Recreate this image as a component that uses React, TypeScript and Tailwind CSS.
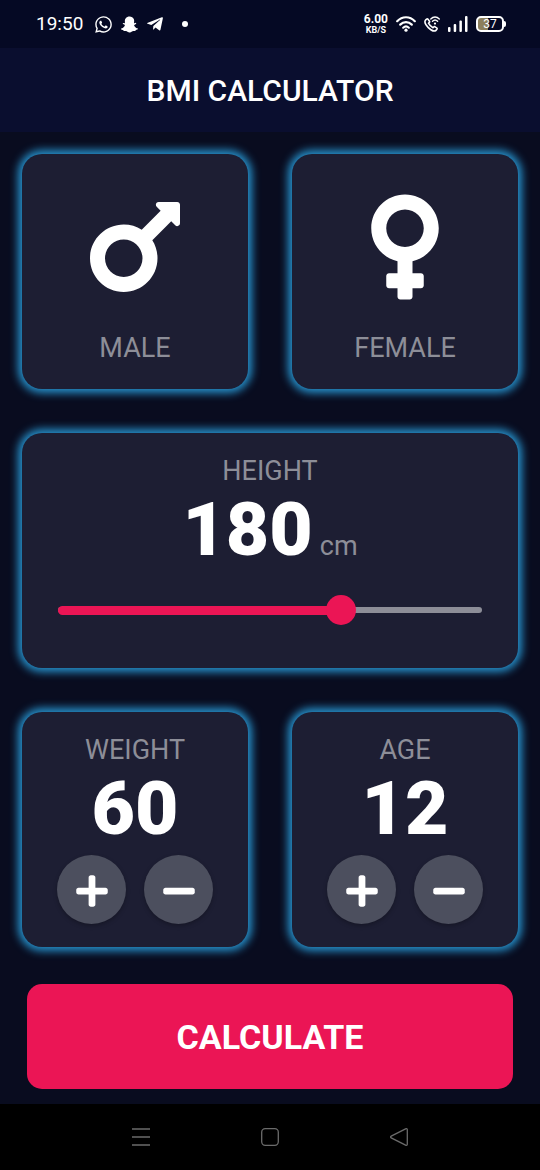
import { useState, type ReactNode } from "react";
import {
  FaMars,
  FaMinus,
  FaPlus,
  FaSnapchatGhost,
  FaTelegramPlane,
  FaVenus,
  FaWhatsapp,
} from "react-icons/fa";

const MIN_HEIGHT = 120;
const MAX_HEIGHT = 210;

const cardStyle =
  "flex min-h-[235px] flex-col items-center rounded-[20px] bg-[#1d1e33] shadow-[0_0_8px_4px_#2792cc]";
const labelStyle = "text-[27px] leading-8 text-[#8d8e98]";
const numberStyle = "text-[75px] leading-[84px] font-black text-white";

function StatusBar() {
  return (
    <div className="flex h-12 items-center justify-between bg-[#050924] pr-[34px] pl-9 text-white">
      <div className="flex items-center">
        <span className="text-[19px] leading-6">19:50</span>
        <FaWhatsapp className="ml-[11px] size-[19px]" />
        <FaSnapchatGhost className="ml-2 size-[17px]" />
        <FaTelegramPlane className="ml-2 size-[18px]" />
        <span className="ml-[18px] size-[6px] rounded-full bg-white" />
      </div>
      <div className="flex items-center gap-2">
        <div className="flex flex-col items-center gap-px font-bold">
          <span className="text-[12px] leading-3">6.00</span>
          <span className="text-[9px] leading-[9px]">KB/S</span>
        </div>
        <svg className="h-4 w-5" viewBox="0 0 20 16" fill="none" stroke="white" strokeWidth="2.2" strokeLinecap="round">
          <path d="M1.2 5.2C6.2-.1 13.8-.1 18.8 5.2" />
          <path d="M4.2 8.6c3.3-3.3 8.3-3.3 11.6 0" />
          <path d="M7.2 11.7c1.7-1.5 3.9-1.5 5.6 0" />
          <circle cx="10" cy="14.2" r="1.6" fill="white" stroke="none" />
        </svg>
        <svg className="size-4" viewBox="0 0 16 16" fill="none" stroke="white" strokeLinecap="round" strokeLinejoin="round">
          <path
            strokeWidth="1.6"
            d="M2.6 3.2 1.5 4.1C.3 5.8 1.9 9.2 4.3 11.6 6.7 14 10.1 15.7 11.9 14.5l1-1.2c.4-.6.3-1-.2-1.4l-1.7-1.1c-.5-.3-1-.2-1.3.2l-.7.8C7.4 11 5.4 9 4.5 7.2l.8-.8c.4-.4.4-.8.2-1.2L4 3.3c-.4-.5-.9-.5-1.4-.1Z"
          />
          <path strokeWidth="1.4" d="M6.8 2.9c2.5-2.5 6-2.5 8.5 0M8.5 5.3c1.5-1.5 3.6-1.5 5.1 0" />
          <circle cx="11" cy="7.6" r="1.1" fill="white" stroke="none" />
        </svg>
        <svg className="h-4 w-5" viewBox="0 0 20 16" fill="white">
          <rect x="0" y="11" width="2.5" height="5" rx="1" />
          <rect x="5.7" y="8" width="2.5" height="8" rx="1" />
          <rect x="11.4" y="4.5" width="2.5" height="11.5" rx="1" />
          <rect x="17" y="0" width="2.5" height="16" rx="1" />
        </svg>
        <div className="flex items-center">
          <div className="flex h-4 w-7 items-center justify-center rounded-[5px] border-2 border-white bg-linear-to-r from-[#8c7f5c] from-40% to-transparent to-40% text-[12px] leading-3">
            37
          </div>
          <span className="h-[6px] w-[2px] rounded-r bg-white" />
        </div>
      </div>
    </div>
  );
}

function GenderCard({ label, icon }: { label: string; icon: ReactNode }) {
  return (
    <button type="button" className={`${cardStyle} gap-[25px] pt-[33px]`}>
      {icon}
      <span className={labelStyle}>{label}</span>
    </button>
  );
}

function RoundButton({ label, onClick, children }: { label: string; onClick: () => void; children: ReactNode }) {
  return (
    <button
      type="button"
      aria-label={label}
      onClick={onClick}
      className="flex size-[69px] items-center justify-center rounded-full bg-[#4c4f5e] pt-[2px] text-4xl text-white shadow-[0_2px_4px_rgba(0,0,0,0.25)]"
    >
      {children}
    </button>
  );
}

function CounterCard({ label, initial }: { label: string; initial: number }) {
  const [value, setValue] = useState(initial);
  return (
    <section className={`${cardStyle} pt-[22px]`}>
      <h2 className={labelStyle}>{label}</h2>
      <output className={numberStyle}>{value}</output>
      <div className="mt-[5px] flex gap-[18px]">
        <RoundButton label={`Increase ${label}`} onClick={() => setValue(value + 1)}>
          <FaPlus />
        </RoundButton>
        <RoundButton label={`Decrease ${label}`} onClick={() => setValue(Math.max(0, value - 1))}>
          <FaMinus />
        </RoundButton>
      </div>
    </section>
  );
}

function HeightCard() {
  const [height, setHeight] = useState(180);
  const filled = ((height - MIN_HEIGHT) / (MAX_HEIGHT - MIN_HEIGHT)) * 100;
  return (
    <section className={`${cardStyle} px-[21px] pt-[22px]`}>
      <label htmlFor="height" className={labelStyle}>
        HEIGHT
      </label>
      <div className="flex items-baseline gap-[7px]">
        <output htmlFor="height" className={numberStyle}>
          {height}
        </output>
        <span className={labelStyle}>cm</span>
      </div>
      <div className="mt-6 grid w-full items-center">
        <div className="mx-[15px] h-[6px] rounded-full bg-[#8d8e98] [grid-area:1/1]" />
        <div className="mx-[15px] [grid-area:1/1]">
          <div className="h-[9px] rounded-full bg-[#eb1555]" style={{ width: `${filled}%` }} />
        </div>
        <input
          id="height"
          type="range"
          min={MIN_HEIGHT}
          max={MAX_HEIGHT}
          value={height}
          onChange={(e) => setHeight(Number(e.target.value))}
          className="h-[30px] w-full cursor-pointer appearance-none bg-transparent [grid-area:1/1] [&::-webkit-slider-thumb]:size-[30px] [&::-webkit-slider-thumb]:appearance-none [&::-webkit-slider-thumb]:rounded-full [&::-webkit-slider-thumb]:bg-[#eb1555]"
        />
      </div>
    </section>
  );
}

function NavBar() {
  return (
    <nav className="flex h-[66px] items-center justify-center gap-[111px] bg-black text-[#6b6b6b]">
      <button type="button" aria-label="Recent apps">
        <svg className="size-[18px]" viewBox="0 0 18 18" fill="none" stroke="currentColor" strokeWidth="1.3">
          <path d="M0 1h18M0 9h18M0 17h18" />
        </svg>
      </button>
      <button type="button" aria-label="Home">
        <svg className="size-[18px]" viewBox="0 0 18 18" fill="none" stroke="currentColor" strokeWidth="1.3">
          <rect x=".7" y=".7" width="16.6" height="16.6" rx="3.5" />
        </svg>
      </button>
      <button type="button" aria-label="Back">
        <svg className="size-[18px]" viewBox="0 0 18 18" fill="none" stroke="currentColor" strokeWidth="1.3" strokeLinejoin="round">
          <path d="M1.2 8.2 15.6.8c.9-.4 1.7 0 1.7.9v14.6c0 .9-.8 1.3-1.7.9L1.2 9.8c-.8-.4-.8-1.2 0-1.6Z" />
        </svg>
      </button>
    </nav>
  );
}

export default function App() {
  return (
    <div className="flex min-h-screen flex-col bg-[#090c1f] font-['Roboto',sans-serif]">
      <StatusBar />
      <header className="flex h-[84px] items-center justify-center bg-[#0a0e2f] pt-[2px]">
        <h1 className="text-[30px] leading-9 font-medium text-white">BMI CALCULATOR</h1>
      </header>
      <main className="flex flex-1 flex-col px-[22px] pt-[22px] pb-[15px]">
        <div className="grid grid-cols-2 gap-[44px]">
          <GenderCard label="MALE" icon={<FaMars className="size-[120px] text-white" />} />
          <GenderCard label="FEMALE" icon={<FaVenus className="size-[120px] text-white" />} />
          <div className="col-span-2 grid">
            <HeightCard />
          </div>
          <CounterCard label="WEIGHT" initial={60} />
          <CounterCard label="AGE" initial={12} />
        </div>
        <button
          type="button"
          className="mx-[5px] mt-[37px] h-[105px] rounded-[15px] bg-[#eb1555] text-[34px] leading-10 font-bold text-white"
        >
          CALCULATE
        </button>
      </main>
      <NavBar />
    </div>
  );
}
